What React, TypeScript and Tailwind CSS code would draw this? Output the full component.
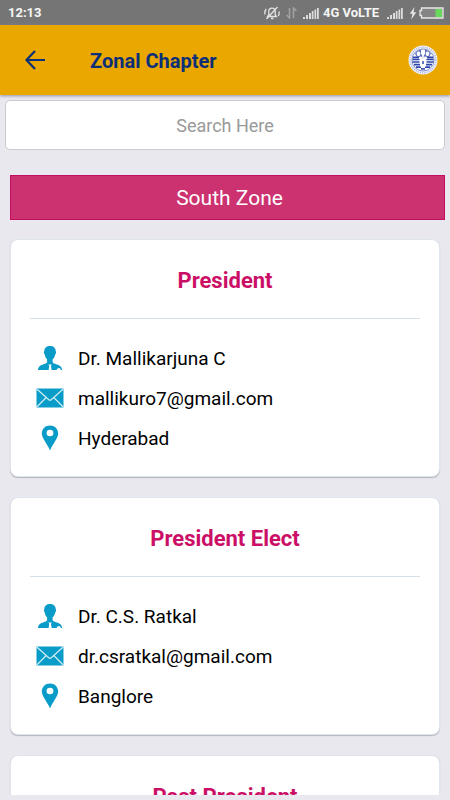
import React from "react";

type Member = { role: string; name: string; email: string; city: string };

const members: Member[] = [
  { role: "President", name: "Dr. Mallikarjuna C", email: "mallikuro7@gmail.com", city: "Hyderabad" },
  { role: "President Elect", name: "Dr. C.S. Ratkal", email: "dr.csratkal@gmail.com", city: "Banglore" },
  { role: "Past President", name: "", email: "", city: "" },
];

function Signal() {
  return (
    <svg width="16" height="12" viewBox="0 0 16 12" aria-hidden="true">
      <path d="M0 10h2v2H0z M3 8h2v4H3z M6 6h2v6H6z M8.800 4h1.700v8H8.800z M11.500 2.500h1.700v9.500h-1.700z M14 1h1.800v11H14z" fill="#dcdcdc" />
    </svg>
  );
}

function StatusBar() {
  return (
    <div className="flex h-[25px] shrink-0 items-center bg-[#757575] pr-1.5 pl-2 text-[13px] font-bold text-[#f5f5f5]">
      <span className="grow">12:13</span>
      <svg width="16" height="14" viewBox="0 0 16 14" fill="none" stroke="#e2e2e2" strokeWidth="1.300" className="mr-1.5" aria-hidden="true">
        <path d="M3.500 10.500h9L11.200 8.500V5.500C11.200 3.500 10 2.200 8 2.200S4.800 3.500 4.800 5.500V8.500z M7 12.500h2.500 M2.500 13L13.500 1 M1 8.500C.6 6.500 1 4.500 2.200 3 M15 5.500c.3 1.500.1 3-.6 4.500" />
      </svg>
      <svg width="11" height="12" viewBox="0 0 11 12" fill="none" stroke="#a3a3a3" strokeWidth="1.500" className="mr-1.5" aria-hidden="true">
        <path d="M3.500 1v10L.6 8 M7.500 11V1l2.900 3" />
      </svg>
      <Signal />
      <span className="mx-1 whitespace-pre">4G VoLTE</span>
      <span className="ml-1 flex">
        <Signal />
      </span>
      <svg width="8" height="14" viewBox="0 0 8 14" className="ml-1.5" aria-hidden="true">
        <path d="M5.500 1L.8 7.800h2.600L2.300 13.500l5-7.300H4.600z" fill="#e4e4e4" />
      </svg>
      <svg width="25" height="12" viewBox="0 0 25 12" className="ml-0.5" aria-hidden="true">
        <path d="M2.500 1h21.500v10H2.500V8.500H1v-5h1.500z" fill="#858585" stroke="#e8e8e8" strokeWidth="1.300" />
        <path d="M16.500 2H23v8h-6.500z" fill="#67d85c" />
      </svg>
    </div>
  );
}

function Emblem() {
  return (
    <svg width="30" height="30" viewBox="0 0 30 30" aria-hidden="true">
      <circle cx="15" cy="15" r="14.500" fill="#f1f2fa" />
      <circle cx="15" cy="15" r="12.800" fill="none" stroke="#b9c0e2" strokeWidth="1.800" strokeDasharray="1.200 1" />
      <circle cx="15" cy="15" r="11" fill="#fff" stroke="#6473bd" strokeWidth=".8" />
      <path d="M7 9c1-2 3-4 6-4.300V9l2 2 2-2V4.700c3 .3 5 2.300 6 4.300l-2 3h-4l-2 2-2-2H9z" fill="#6474c0" />
      <path d="M5 12.300h6 M19 12.300h6 M4.500 14.500h7 M18.500 14.500h7 M4.500 17h7 M18.500 17h7 M6 19.600h6 M18 19.600h6 M8 22.200h5 M17 22.200h5" stroke="#2f47ac" strokeWidth="1.700" fill="none" />
      <path d="M15 10v6 M12.500 11.500c1.500 3 1.500 6 .5 10 M17.500 11.500c-1.500 3-1.500 6-.5 10" stroke="#fff" strokeWidth="1.600" fill="none" />
      <path d="M14.200 16h1.600v3h-1.600z M13 23h4v1.700h-4z" fill="#4258b2" />
      <ellipse cx="10.500" cy="8.800" rx="1.800" ry="2.400" fill="#fff" />
      <ellipse cx="19.500" cy="8.800" rx="1.800" ry="2.400" fill="#fff" />
    </svg>
  );
}

function PersonIcon() {
  return (
    <svg width="26" height="26" viewBox="0 0 26 26" fill="#0a9cc8" aria-hidden="true">
      <path d="M13 1C9.500 1 7.300 3 7.300 6.300 6.700 6.600 6.700 8.600 7.700 9.200c.3 2.300 1.100 4.100 2.400 5.300v2.700C9.500 19 4.200 19.400 2.600 21.200 1.600 22.200 1 23.500 1 25h10.600l.7-4.300-1-1.300h3.600l-1 1.300.8 4.300h4.900c.4-1.200 1.300-2.100 2.600-2.100.8 0 1.300 1 1.700 2.100H25c0-1.500-.6-2.800-1.600-3.800-1.600-1.800-6.900-2.200-7.800-4v-2.700c1.300-1.200 2.100-3 2.700-5.300 1-.6 1-2.600.4-2.900C18.700 3 16.500 1 13 1z" />
    </svg>
  );
}

function MailIcon() {
  return (
    <svg width="28" height="20" viewBox="0 0 28 20" aria-hidden="true">
      <path d="M.5.500h27v19H.5z" fill="#0a9cc8" />
      <path d="M.8 1L12.500 11.500c1 .9 2 .9 3 0L27.200 1 M.8 19L10.200 9.500 M27.200 19L17.800 9.500" fill="none" stroke="#d5eff7" strokeWidth="1.100" />
    </svg>
  );
}

function PinIcon() {
  return (
    <svg width="18" height="26" viewBox="0 0 18 26" aria-hidden="true">
      <path fillRule="evenodd" d="M9 .5C4.300.500.800 4 .800 8.600.800 13 6 18.500 9 25.500 12 18.500 17.200 13 17.200 8.600 17.200 4 13.700.500 9 .5zM9 4.800a3.400 3.200 0 110 6.400A3.400 3.200 0 019 4.800z" fill="#0a9cc8" />
    </svg>
  );
}

function Row({ icon, children }: { icon: React.ReactNode; children: React.ReactNode }) {
  return (
    <li className="flex h-10 items-center gap-3">
      <span className="flex w-8 shrink-0 justify-center">{icon}</span>
      <span className="pt-0.5">{children}</span>
    </li>
  );
}

function MemberCard({ member }: { member: Member }) {
  return (
    <article className="shrink-0 rounded-lg border border-[#dfe5ee] bg-white px-[19px] pb-[18px] shadow-[0_1px_1px_#b4b6bd]">
      <h3 className="flex h-[79px] items-center justify-center border-b border-[#d5e0e8] pt-0.5 text-[22px] font-bold text-[#cc0f66]">
        {member.role}
      </h3>
      <ul className="pt-[19px] pl-1 text-[19px] text-black">
        <Row icon={<PersonIcon />}>{member.name}</Row>
        <Row icon={<MailIcon />}>
          <a href={`mailto:${member.email}`}>{member.email}</a>
        </Row>
        <Row icon={<PinIcon />}>{member.city}</Row>
      </ul>
    </article>
  );
}

export default function App() {
  return (
    <div className="flex h-screen flex-col bg-[#e9e8ee] pb-[5px] font-[Roboto,sans-serif]">
      <StatusBar />
      <header className="z-10 flex h-[70px] shrink-0 items-center bg-[#eaa700] pr-3 pl-6 text-[#0b2f78] shadow-[0_1px_3px_#8f93a5]">
        <button type="button" aria-label="Back" className="mr-11">
          <svg width="22" height="22" viewBox="0 0 22 22" fill="none" stroke="currentColor" strokeWidth="2.200" aria-hidden="true">
            <path d="M21 11H3 M11 2L2.500 11 11 20" />
          </svg>
        </button>
        <h1 className="grow pt-0.5 text-xl font-bold">Zonal Chapter</h1>
        <Emblem />
      </header>
      <main className="flex min-h-0 grow flex-col overflow-y-auto pt-[5px] [scrollbar-width:none]">
        <input
          type="text"
          aria-label="Search Here"
          placeholder="Search Here"
          className="mx-[5px] h-[50px] shrink-0 rounded-[5px] border border-[#cbcbcd] bg-white text-center text-lg placeholder:text-[#999999]"
        />
        <h2 className="mt-[25px] mr-[5px] ml-2.5 flex h-[45px] shrink-0 items-center justify-center border border-[#c40d60] bg-[#cc3170] pt-0.5 pl-1 text-[21px] text-white">
          South Zone
        </h2>
        <div className="mt-[19px] flex flex-col gap-5 px-2.5">
          {members.map((m) => (
            <MemberCard key={m.role} member={m} />
          ))}
        </div>
      </main>
    </div>
  );
}
